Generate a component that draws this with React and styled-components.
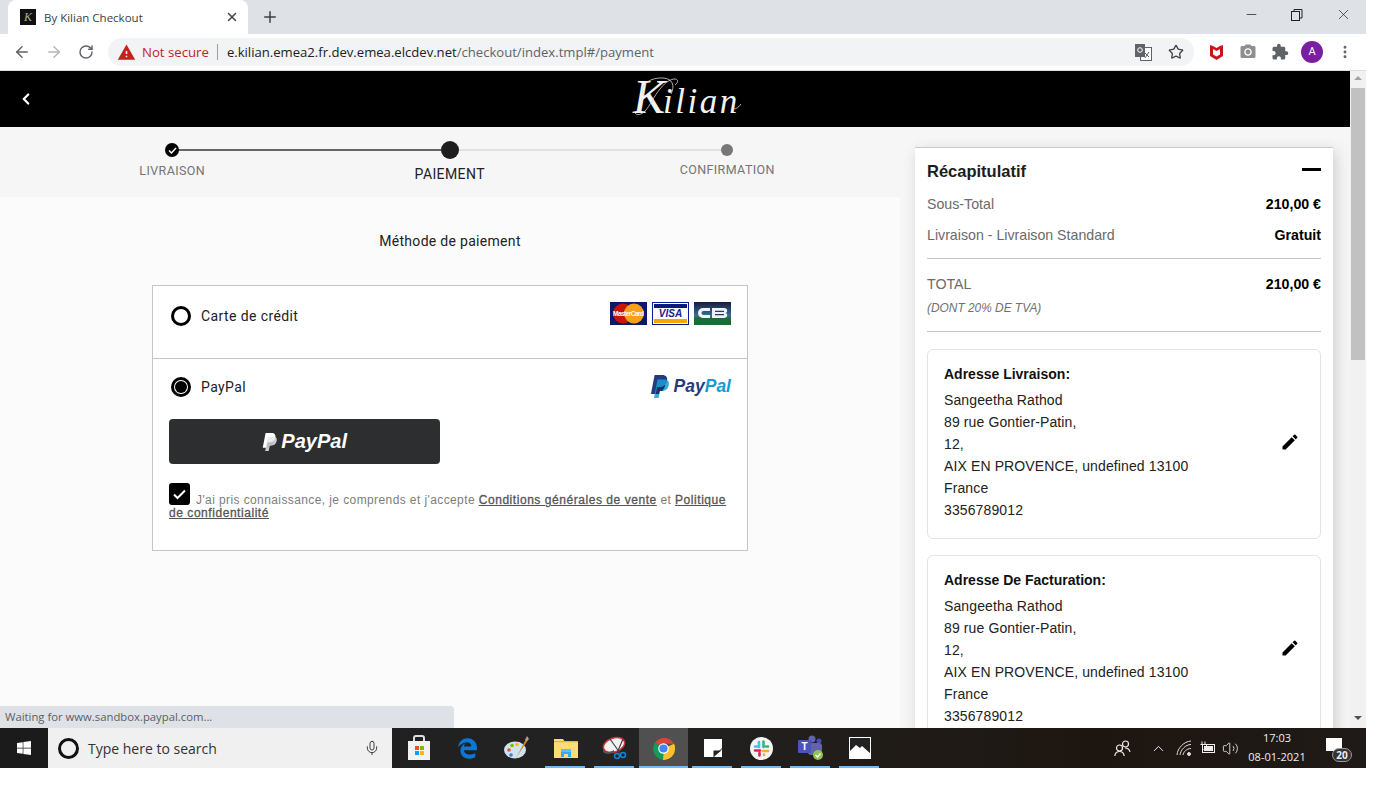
import React from 'react';
import styled, { createGlobalStyle } from 'styled-components';
import { ArrowLeft, ArrowRight, RotateCw, Star, X, Plus, Minus, MoreVertical, ChevronLeft, Mic, ChevronUp, Volume2 } from 'lucide-react';
import { MdEdit, MdCameraAlt, MdExtension, MdWarning } from 'react-icons/md';
import { FaWindows, FaEdgeLegacy } from 'react-icons/fa';

const Global = createGlobalStyle`
  html, body { margin: 0; padding: 0; background: #fff; }
  * { box-sizing: border-box; }
  body { font-family: Roboto, "Liberation Sans", sans-serif; }
`;

const Screen = styled.div`
  width: 1366px;
  height: 768px;
  display: flex;
  flex-direction: column;
  overflow: hidden;
`;

/* browser chrome */
const TabStrip = styled.div`
  height: 34px;
  flex: none;
  background: #dee1e6;
  display: flex;
  align-items: flex-end;
  padding-left: 8px;
`;
const Tab = styled.div`
  width: 240px;
  height: 34px;
  background: #fff;
  border-radius: 8px 8px 0 0;
  display: flex;
  align-items: center;
  padding: 0 9px 0 12px;
  font: 11.5px "Open Sans", sans-serif;
  color: #3c4043;
`;
const Favicon = styled.div`
  width: 16px;
  height: 16px;
  background: #111;
  color: #aaa;
  font: italic 12px/16px "Liberation Serif", serif;
  text-align: center;
  margin-right: 8px;
  flex: none;
`;
const TabTitle = styled.span`
  flex: 1;
  white-space: nowrap;
`;
const NewTab = styled.div`
  display: flex;
  align-self: center;
  margin-left: 13px;
  color: #3c4043;
`;
const WindowButtons = styled.div`
  margin-left: auto;
  display: flex;
  align-self: flex-start;
  height: 29px;
  align-items: center;
  color: #222;
`;
const WindowButton = styled.div`
  width: 46px;
  display: flex;
  justify-content: center;
`;
const Toolbar = styled.div`
  height: 37px;
  flex: none;
  background: #fff;
  border-bottom: 1px solid #dadce0;
  display: flex;
  align-items: center;
  padding: 0 0 0 6px;
  color: #5f6368;
`;
const NavButton = styled.div`
  width: 32px;
  display: flex;
  justify-content: center;
  color: ${p => (p.$off ? '#b4b6b9' : '#5f6368')};
`;
const Omnibox = styled.div`
  margin-left: 6px;
  width: 1086px;
  height: 28px;
  border-radius: 14px;
  background: #f1f3f4;
  display: flex;
  align-items: center;
  padding: 0 10px 0 9px;
  font: 13px "Open Sans", sans-serif;
  white-space: nowrap;
`;
const NotSecure = styled.span`
  color: #c5221f;
  margin-left: 6px;
  padding-right: 8px;
  border-right: 1px solid #9aa0a6;
  line-height: 16px;
  font-size: 13.2px;
`;
const Url = styled.span`
  margin-left: 9px;
  color: #5f6368;
  font-size: 13.1px;
  & b { font-weight: 400; color: #202124; }
`;
const OmniIcons = styled.div`
  margin-left: auto;
  display: flex;
  align-items: center;
  gap: 16px;
  color: #5f6368;
`;
const Extensions = styled.div`
  display: flex;
  align-items: center;
  margin-left: 13px;
  gap: 14px;
`;
const ExtSlot = styled.span`
  width: 18px;
  display: flex;
  justify-content: center;
`;
const Avatar = styled.div`
  width: 22px;
  height: 22px;
  border-radius: 50%;
  background: #7b1fa2;
  color: #fff;
  font: 11px/22px Roboto, sans-serif;
  text-align: center;
  margin-left: -2px;
`;

/* page */
const Viewport = styled.div`
  flex: 1;
  min-height: 0;
  display: flex;
  position: relative;
`;
const Page = styled.div`
  flex: 1;
  min-width: 0;
  display: flex;
  flex-direction: column;
  overflow: hidden;
`;
const Header = styled.header`
  height: 56px;
  flex: none;
  background: #000;
  color: #fff;
  display: flex;
  align-items: center;
  padding-left: 17px;
`;
const Logo = styled.div`
  position: relative;
  margin-left: 598px;
  font: italic 400 35px/56px "Liberation Serif", serif;
  letter-spacing: 2.5px;
  color: #f2f2f2;
  white-space: nowrap;
  & b { font-weight: 400; font-size: 48px; letter-spacing: -2px; }
  & svg { position: absolute; left: 0; top: 7px; }
`;
const Body = styled.div`
  flex: 1;
  min-height: 0;
  display: flex;
  background: #f6f6f6;
`;
const Left = styled.main`
  width: 900px;
  flex: none;
  background: #fbfbfb;
`;
const Stepper = styled.div`
  height: 70px;
  background: #f6f6f6;
  padding-left: 33.5px;
  display: flex;
`;
const Step = styled.div`
  width: 277.5px;
  position: relative;
  display: flex;
  flex-direction: column;
  align-items: center;
  padding-top: 36px;
`;
const StepLine = styled.span`
  position: absolute;
  top: 22px;
  left: 50%;
  width: 100%;
  height: 2px;
  background: ${p => p.$color};
`;
const Dot = styled.span`
  position: absolute;
  top: ${p => 23 - p.$size / 2}px;
  left: calc(50% - ${p => p.$size / 2}px);
  width: ${p => p.$size}px;
  height: ${p => p.$size}px;
  border-radius: 50%;
  background: ${p => p.$color};
  color: #fff;
  display: flex;
  align-items: center;
  justify-content: center;
`;
const StepLabel = styled.span`
  font-size: ${p => (p.$active ? 14 : 12.5)}px;
  color: ${p => (p.$active ? '#222' : '#757575')};
  margin-top: ${p => p.$top}px;
  line-height: 16px;
  letter-spacing: 0.4px;
`;
const MethodTitle = styled.h2`
  margin: 36px 0 36px;
  text-align: center;
  font-size: 14px;
  font-weight: 400;
  line-height: 16px;
  color: #222;
  letter-spacing: 0.3px;
`;
const PayBox = styled.section`
  width: 596px;
  margin: 0 auto;
  height: 266px;
  border: 1px solid #c4c4c4;
  background: #fff;
`;
const MethodRow = styled.div`
  display: flex;
  align-items: center;
  height: ${p => (p.$first ? '73px' : 'auto')};
  padding: ${p => (p.$first ? '0 16px 12px 18px' : '18px 16px 0 18px')};
  border-bottom: ${p => (p.$first ? '1px solid #c4c4c4' : '0')};
`;
const Radio = styled.span`
  width: 20px;
  height: 20px;
  border-radius: 50%;
  border: 3px solid #000;
  display: flex;
  align-items: center;
  justify-content: center;
  flex: none;
  & i { width: 12px; height: 12px; border-radius: 50%; background: #000; }
`;
const MethodName = styled.span`
  margin-left: 10px;
  font: 14px Roboto, sans-serif;
  letter-spacing: 0.4px;
  color: #222;
`;
const CardIcons = styled.div`
  margin-left: auto;
  margin-bottom: 6px;
  display: flex;
  gap: 5px;
`;
const PayPalMark = styled.div`
  margin: -3px 0 -1px auto;
  display: flex;
  align-items: center;
  gap: 4px;
  font: italic 700 17.5px "Liberation Sans", sans-serif;
  color: #253b80;
  & em { color: #179bd7; }
`;
const PayPalButton = styled.button`
  display: flex;
  align-items: center;
  justify-content: center;
  gap: 4px;
  width: 271px;
  height: 45px;
  margin: 22px 0 0 16px;
  border: 0;
  border-radius: 4px;
  background: #2c2e2f;
  color: #fff;
  font: italic 700 20px "Liberation Sans", sans-serif;
`;
const Consent = styled.p`
  margin: 19px 14px 0 16px;
  font: 12px/13px "Liberation Sans", sans-serif;
  letter-spacing: 0.4px;
  color: #7d7d7d;
  & a { color: #555; text-decoration: underline; letter-spacing: 0.55px; -webkit-text-stroke: 0.3px #555; }
`;
const Check = styled.span`
  display: inline-block;
  width: 21px;
  height: 22px;
  padding: 6px 4px;
  border-radius: 3px;
  background: #000;
  margin-right: 6px;
  vertical-align: -1px;
  & svg { display: block; }
`;

const Right = styled.aside`
  flex: 1;
  min-width: 0;
  padding: 20px 17px 0 15px;
`;
const Summary = styled.div`
  background: #fff;
  border-top: 1px solid #c9c9c9;
  box-shadow: 3px 4px 14px rgba(0, 0, 0, 0.16);
  padding: 12px 12px 20px;
`;
const SummaryHead = styled.div`
  display: flex;
  align-items: center;
  justify-content: space-between;
  height: 22px;
  font: 700 16.5px "Liberation Sans", sans-serif;
  color: #1c1c1c;
  margin-bottom: 6px;
  & i { width: 19px; height: 3px; background: #000; margin-bottom: 3px; }
`;
const Line = styled.div`
  display: flex;
  justify-content: space-between;
  align-items: center;
  height: 31px;
  font: 14.2px "Liberation Sans", sans-serif;
  color: #6b6b6b;
  & b { color: #000; }
`;
const Note = styled.div`
  font: italic 11.9px "Liberation Sans", sans-serif;
  color: #707070;
  height: 16px;
  line-height: 16px;
  margin-top: 1px;
`;
const Rule = styled.hr`
  border: 0;
  height: 1px;
  background: #c4c4c4;
  margin: ${p => p.$m};
`;
const Address = styled.div`
  height: 190px;
  margin-bottom: 16px;
  border: 1px solid #e4e4e4;
  border-radius: 6px;
  padding: 15px 16px;
  color: #222;
  display: flex;
  align-items: center;
`;
const AddressText = styled.div`
  flex: 1;
  align-self: flex-start;
  font: 14px/22px "Liberation Sans", sans-serif;
  letter-spacing: 0.12px;
  & h4 { margin: 0 0 6px; font-size: 14px; font-weight: 700; line-height: 18px; color: #111; letter-spacing: 0; }
  & div { height: 22px; }
`;
const EditIcon = styled.span`
  display: flex;
  margin: 0 4px 4px 0;
`;

const Scrollbar = styled.div`
  width: 16px;
  flex: none;
  background: #f1f1f1;
  display: flex;
  flex-direction: column;
  align-items: center;
`;
const ScrollArrow = styled.span`
  width: 0;
  height: 0;
  border-left: 4px solid transparent;
  border-right: 4px solid transparent;
  ${p => (p.$down ? 'border-top: 4px solid #505050; margin-top: 356px;' : 'border-bottom: 4px solid #a3a3a3; margin-top: 5px;')}
`;
const ScrollThumb = styled.span`
  width: 14px;
  height: 272px;
  margin-top: 8px;
  background: #c1c1c1;
`;
const StatusBubble = styled.div`
  position: absolute;
  left: 0;
  bottom: 0;
  width: 454px;
  height: 22px;
  background: #dee1e6;
  border-top-right-radius: 4px;
  padding-left: 5px;
  font: 11.3px/22px "Open Sans", sans-serif;
  color: #5a5e63;
`;

/* taskbar */
const Taskbar = styled.footer`
  height: 40px;
  flex: none;
  display: flex;
  align-items: stretch;
  background: linear-gradient(90deg, #1b1b1b 0%, #232323 45%, #1d1610 80%, #1f1a17 100%);
  color: #fff;
`;
const Start = styled.div`
  width: 48px;
  display: flex;
  align-items: center;
  justify-content: center;
`;
const Search = styled.div`
  width: 344px;
  background: #f0f0f0;
  display: flex;
  align-items: center;
  padding: 0 12px 0 10px;
  font: 14px "Open Sans", sans-serif;
  color: #333;
  & span { flex: 1; margin-left: 9px; }
`;
const Cortana = styled.i`
  width: 21px;
  height: 21px;
  border-radius: 50%;
  border: 3px solid #111;
`;
const Apps = styled.div`
  display: flex;
  padding-left: 2px;
`;
const AppSlot = styled.div`
  width: 49px;
  display: flex;
  align-items: center;
  justify-content: center;
  position: relative;
  background: ${p => (p.$active ? '#505050' : 'transparent')};
  &::after {
    content: '';
    display: ${p => (p.$open ? 'block' : 'none')};
    position: absolute;
    left: ${p => (p.$active ? 0 : 4)}px;
    right: ${p => (p.$active ? 0 : 5)}px;
    bottom: 0;
    height: 2px;
    background: #76b9ed;
  }
`;
const Tray = styled.div`
  margin-left: auto;
  display: flex;
  align-items: center;
  padding-right: 17px;
  color: #eee;
`;
const TrayIcon = styled.span`
  display: flex;
  margin-left: ${p => p.$ml || 0}px;
`;
const Clock = styled.div`
  width: 62px;
  margin: 0 0 2px 7px;
  text-align: center;
  font: 11px/19px "Open Sans", sans-serif;
  color: #eee;
`;
const Notify = styled.div`
  position: relative;
  margin-left: 17px;
  width: 24px;
  height: 24px;
  & span {
    position: absolute;
    right: -3px;
    bottom: -2px;
    width: 20px;
    height: 14px;
    border-radius: 8px;
    border: 1px solid #999;
    background: #333;
    font: 700 10px/12px "Open Sans", sans-serif;
    text-align: center;
  }
  & i { position: absolute; left: 1px; top: 2px; width: 16px; height: 13px; background: #fff; }
`;

const PayPalP = ({ size = 20, a = '#253b80', b = '#179bd7', c = '#222d65' }) => (
  <svg width={size * 0.85} height={size} viewBox="0 0 17 20">
    <path d="M4 0h6.500C14 0 15.500 2 14.800 5 14 9 11.500 10.500 8 10.500H6L5 16.500H.8z" fill={a} />
    <path d="M6.500 4h6c3 0 4.500 1.800 3.800 5-.8 3.600-3 5-6.300 5H8.500L7.500 20H3.500z" fill={b} opacity=".85" />
    <path d="M6 10.500h2c2 0 4-.6 5.300-2.200C12.800 11.800 10.800 14 10 14H8.500l-.6 2.500H5z" fill={c} />
  </svg>
);

const MasterCard = () => (
  <svg width="37" height="23" viewBox="0 0 37 23">
    <rect width="37" height="23" fill="#0a1a6b" />
    <circle cx="13" cy="11.500" r="10" fill="#c81505" />
    <circle cx="24" cy="11.500" r="10" fill="#f7a01b" />
    <text x="18.500" y="13.500" textAnchor="middle" fontSize="6.500" fontWeight="700" fill="#fff" fontFamily="Liberation Sans, sans-serif" textLength="31">MasterCard</text>
  </svg>
);
const Visa = () => (
  <svg width="37" height="23" viewBox="0 0 37 23">
    <rect x=".5" y=".5" width="36" height="22" fill="#fff" stroke="#0a1a9b" />
    <rect x="2" y="2" width="33" height="4" fill="#0a1a7b" />
    <rect x="2" y="17" width="33" height="4" fill="#f7a600" />
    <text x="18.500" y="15" textAnchor="middle" fontSize="10" fontWeight="700" fontStyle="italic" fill="#12247f" fontFamily="Liberation Sans, sans-serif">VISA</text>
  </svg>
);
const CbCard = () => (
  <svg width="37" height="23" viewBox="0 0 37 23">
    <defs>
      <linearGradient id="cb" x1="0" y1="0" x2="0" y2="1">
        <stop offset="0" stopColor="#17193f" />
        <stop offset=".6" stopColor="#3a6f96" />
        <stop offset=".7" stopColor="#1d6a3c" />
        <stop offset="1" stopColor="#1a6a30" />
      </linearGradient>
    </defs>
    <rect width="37" height="23" fill="url(#cb)" />
    <path d="M16 6H9a5 5 0 0 0 0 10h7v-3H9.500a2 2 0 0 1 0-4H16z M18 6h12c4 0 4 4.500 1.500 5 2.500.5 2.500 5-1.500 5H18z" fill="#eef2f6" />
    <path d="M21 8.800h9v1.200h-9zM21 12h9v1.200h-9z" fill="#2a3a66" />
  </svg>
);
const Translate = () => (
  <svg width="17" height="17" viewBox="0 0 17 17">
    <rect x="5.500" y="3.500" width="11" height="13" fill="#fff" stroke="#5f6368" />
    <rect x="0" y="0" width="10" height="13" fill="#5f6368" />
    <circle cx="5" cy="6" r="2.300" fill="none" stroke="#fff" />
    <path d="M9 8l5 5M14 8l-4 6" stroke="#5f6368" />
  </svg>
);
const Store = () => (
  <svg width="24" height="26" viewBox="0 0 24 26">
    <path d="M7 6V3a2 2 0 0 1 2-2h6a2 2 0 0 1 2 2v3" fill="none" stroke="#ddd" strokeWidth="2" />
    <rect x="1" y="6" width="22" height="19" fill="#f2f2f2" />
    <rect x="8" y="11" width="4" height="4" fill="#f25022" />
    <rect x="13" y="11" width="4" height="4" fill="#7fba00" />
    <rect x="8" y="16" width="4" height="4" fill="#00a4ef" />
    <rect x="13" y="16" width="4" height="4" fill="#ffb900" />
  </svg>
);
const Palette = () => (
  <svg width="26" height="26" viewBox="0 0 26 26">
    <ellipse cx="11" cy="15" rx="11" ry="8.500" fill="#cfe3ee" />
    <circle cx="5" cy="15" r="1.800" fill="#e0533d" />
    <circle cx="8" cy="10.500" r="1.800" fill="#7fba00" />
    <circle cx="7" cy="20" r="1.800" fill="#2f7fd6" />
    <circle cx="13" cy="9.500" r="1.800" fill="#ffb900" />
    <path d="M11 25L22 4l2 1L14 20z" fill="#d9822b" />
    <path d="M21 5l2-4 2 3-2 2z" fill="#b9a27a" />
  </svg>
);
const Folder = () => (
  <svg width="24" height="20" viewBox="0 0 24 20">
    <path d="M0 1h9l2 3h13v16H0z" fill="#fddc75" />
    <rect y="3" width="24" height="1.200" fill="#e2b33c" />
    <path d="M7 19v-6h10v6h-3v-3h-4v3z" fill="#3ea6e6" />
    <rect x="7" y="11" width="10" height="3" fill="#5fbdf0" />
  </svg>
);
const Snip = () => (
  <svg width="26" height="24" viewBox="0 0 26 24">
    <ellipse cx="12" cy="9" rx="11" ry="7" fill="#f2f2f2" stroke="#d3323c" strokeWidth="1.500" transform="rotate(-20 12 9)" />
    <path d="M1 14c3 3 8 2 11 0l0 2c-3 2-8 3-11 0z" fill="#555" />
    <path d="M8 3l10 14M21 3L15 17" stroke="#444" strokeWidth="1.200" />
    <circle cx="15" cy="20" r="2.500" fill="none" stroke="#1583d8" strokeWidth="1.500" />
    <circle cx="21" cy="19" r="2.500" fill="none" stroke="#1583d8" strokeWidth="1.500" />
  </svg>
);
const Chrome = () => (
  <svg width="23" height="23" viewBox="0 0 24 24">
    <path d="M12 12L3.200 5.500A12 12 0 0 1 23 7H12z" fill="#db4437" />
    <path d="M12 12L23 7a12 12 0 0 1-11.500 17z" fill="#fbc02d" />
    <path d="M12 12l-.5 12A12 12 0 0 1 3.200 5.500z" fill="#0f9d58" />
    <circle cx="12" cy="12" r="5.500" fill="#fff" />
    <circle cx="12" cy="12" r="4.300" fill="#4285f4" />
  </svg>
);
const Sticky = () => (
  <svg width="18" height="18" viewBox="0 0 18 18">
    <path d="M0 0h18v9l-9 9H0z" fill="#fff" />
    <path d="M10 18l8-8v8z" fill="#fff" />
    <path d="M9.500 17.500v-6h8z" fill="#222" />
  </svg>
);
const Slack = () => (
  <svg width="23" height="23" viewBox="0 0 23 23">
    <circle cx="11.500" cy="11.500" r="11.500" fill="#f4f4f4" />
    <g strokeWidth="2.600" strokeLinecap="round">
      <path d="M9 5v5M5 9.500h2" stroke="#36c5f0" />
      <path d="M13.500 4.500v5.500M16 9.500h2" stroke="#2eb67d" />
      <path d="M13 14h5M14 17.500v.5" stroke="#ecb22e" />
      <path d="M5 13.500h5M9.500 16v2.500" stroke="#e01e5a" />
    </g>
  </svg>
);
const Teams = () => (
  <svg width="26" height="26" viewBox="0 0 26 26">
    <circle cx="14" cy="4" r="3.500" fill="#6264a7" />
    <circle cx="21" cy="6" r="2.500" fill="#464eb8" />
    <rect x="10" y="8" width="14" height="12" rx="3" fill="#6264a7" />
    <rect x="0" y="5" width="13" height="13" rx="1" fill="#4b53bc" />
    <text x="6.500" y="15" textAnchor="middle" fontSize="10" fontWeight="700" fill="#fff" fontFamily="Liberation Sans, sans-serif">T</text>
    <circle cx="20" cy="20" r="5" fill="#92c353" />
    <path d="M17.500 20l2 2 3-3.500" fill="none" stroke="#fff" strokeWidth="1.300" />
  </svg>
);
const Photos = () => (
  <svg width="22" height="22" viewBox="0 0 22 22">
    <rect x=".5" y=".5" width="21" height="21" fill="#222" stroke="#fff" />
    <path d="M0 15l7-7 4 3 2-2 9 8v5H0z" fill="#fff" />
  </svg>
);
const Wifi = () => (
  <svg width="16" height="16" viewBox="0 0 16 16" fill="none" stroke="#ddd" strokeWidth="1">
    <path d="M1 15C1.500 8 8 1.500 15 1" />
    <path d="M4 15C4.500 10 9.500 4.500 15 4.500" />
    <path d="M7 15c.5-3 3.500-6.500 8-6.500" />
    <circle cx="13" cy="14" r="1.500" fill="#ddd" />
  </svg>
);
const Battery = () => (
  <svg width="17" height="14" viewBox="0 0 17 14" fill="none" stroke="#eee">
    <rect x="3.500" y="3.500" width="12" height="8" />
    <rect x="5" y="5" width="9" height="5" fill="#eee" stroke="none" />
    <path d="M3 .5v3M6 .5v3M1.500 3.500h6v2c0 1.500-3 2-3 3" />
  </svg>
);
const People = () => (
  <svg width="17" height="17" viewBox="0 0 17 17" fill="none" stroke="#eee" strokeWidth="1.200">
    <circle cx="11.500" cy="4" r="3" />
    <circle cx="5.500" cy="8" r="3" />
    <path d="M.8 16c.4-3 2-4.500 4.700-4.500S9.800 13 10.200 16M11 8c2.500 0 4.500 1.500 5 4" />
  </svg>
);

const address = ['Sangeetha Rathod', '89 rue Gontier-Patin,', '12,', 'AIX EN PROVENCE, undefined 13100', 'France', '3356789012'];

const AddressCard = ({ title }) => (
  <Address>
    <AddressText>
      <h4>{title}</h4>
      {address.map(l => <div key={l}>{l}</div>)}
    </AddressText>
    <EditIcon><MdEdit size={20} color="#000" /></EditIcon>
  </Address>
);

export default function App() {
  return (
    <Screen>
      <Global />
      <TabStrip>
        <Tab>
          <Favicon>K</Favicon>
          <TabTitle>By Kilian Checkout</TabTitle>
          <X size={14} strokeWidth={2.5} color="#444" />
        </Tab>
        <NewTab><Plus size={18} strokeWidth={2} /></NewTab>
        <WindowButtons>
          <WindowButton><Minus size={15} strokeWidth={1.2} /></WindowButton>
          <WindowButton>
            <svg width="12" height="12" viewBox="0 0 12 12" fill="none" stroke="#222"><rect x=".5" y="2.500" width="8" height="9" /><path d="M3 2.500V.5h8v8.500H8.500" /></svg>
          </WindowButton>
          <WindowButton><X size={17} strokeWidth={1} /></WindowButton>
        </WindowButtons>
      </TabStrip>
      <Toolbar>
        <NavButton><ArrowLeft size={18} strokeWidth={2} /></NavButton>
        <NavButton $off><ArrowRight size={18} strokeWidth={2} /></NavButton>
        <NavButton><RotateCw size={16} strokeWidth={2.2} /></NavButton>
        <Omnibox>
          <MdWarning size={19} color="#c5221f" />
          <NotSecure>Not secure</NotSecure>
          <Url><b>e.kilian.emea2.fr.dev.emea.elcdev.net</b>/checkout/index.tmpl#/payment</Url>
          <OmniIcons>
            <Translate />
            <Star size={16} strokeWidth={2} color="#444" />
          </OmniIcons>
        </Omnibox>
        <Extensions>
          <ExtSlot>
            <svg width="15" height="17" viewBox="0 0 15 17"><path d="M1 1l3 1 3.500 2L11 2l3-1v11l-6.500 4L1 12z" fill="#c8161d" /><path d="M4 5l3.500 2L11 5v5.500l-3.500 2-3.500-2z" fill="#fff" /></svg>
          </ExtSlot>
          <MdCameraAlt size={18} color="#8f8f8f" />
          <MdExtension size={18} color="#5f6368" />
          <Avatar>A</Avatar>
          <MoreVertical size={16} strokeWidth={2.4} color="#5f6368" />
        </Extensions>
      </Toolbar>
      <Viewport>
        <Page>
          <Header>
            <ChevronLeft size={18} strokeWidth={3} />
            <Logo>
              <b>K</b>ilian
              <svg width="112" height="42" viewBox="0 0 112 42" fill="none" stroke="#d8d8d8" strokeWidth=".8">
                <path d="M12 20C4 13 14 1 30 2c10 .5 12 8 8 16" />
                <path d="M1 36c3 4 7 3 11-1 5-5 9-15 15-22 4-5 8-9 14-10 4-.5 5 3 1 6" />
                <path d="M100 32c2 2 5 0 8-4" />
              </svg>
            </Logo>
          </Header>
          <Body>
            <Left>
              <Stepper>
                <Step>
                  <StepLine $color="#666" />
                  <Dot $size={14} $color="#000">
                    <svg width="9" height="9" viewBox="0 0 9 9" fill="none" stroke="#fff" strokeWidth="1.500"><path d="M1 4.500l2.500 2.500L8 2" /></svg>
                  </Dot>
                  <StepLabel $top={0}>LIVRAISON</StepLabel>
                </Step>
                <Step>
                  <StepLine $color="#e2e2e2" />
                  <Dot $size={18} $color="#1e1e1e" />
                  <StepLabel $active $top={3}>PAIEMENT</StepLabel>
                </Step>
                <Step>
                  <Dot $size={12} $color="#777" />
                  <StepLabel $top={-1}>CONFIRMATION</StepLabel>
                </Step>
              </Stepper>
              <MethodTitle>Méthode de paiement</MethodTitle>
              <PayBox>
                <MethodRow $first>
                  <Radio />
                  <MethodName>Carte de crédit</MethodName>
                  <CardIcons><MasterCard /><Visa /><CbCard /></CardIcons>
                </MethodRow>
                <MethodRow>
                  <Radio><i /></Radio>
                  <MethodName>PayPal</MethodName>
                  <PayPalMark><PayPalP size={23} /><span>Pay<em>Pal</em></span></PayPalMark>
                </MethodRow>
                <PayPalButton>
                  <PayPalP size={18} a="#fff" b="#e8e8e8" c="#bdbdbd" />
                  PayPal
                </PayPalButton>
                <Consent>
                  <Check>
                    <svg width="13" height="11" viewBox="0 0 13 11" fill="none" stroke="#fff" strokeWidth="2"><path d="M1 5.500l3.500 3.500L12 1.500" /></svg>
                  </Check>
                  J'ai pris connaissance, je comprends et j'accepte <a>Conditions générales de vente</a> et <a>Politique de confidentialité</a>
                </Consent>
              </PayBox>
            </Left>
            <Right>
              <Summary>
                <SummaryHead>Récapitulatif<i /></SummaryHead>
                <Line><span>Sous-Total</span><b>210,00 €</b></Line>
                <Line><span>Livraison - Livraison Standard</span><b>Gratuit</b></Line>
                <Rule $m="8px 0 9px" />
                <Line><span>TOTAL</span><b>210,00 €</b></Line>
                <Note>(DONT 20% DE TVA)</Note>
                <Rule $m="15px 0 17px" />
                <AddressCard title="Adresse Livraison:" />
                <AddressCard title="Adresse De Facturation:" />
              </Summary>
            </Right>
          </Body>
        </Page>
        <Scrollbar>
          <ScrollArrow />
          <ScrollThumb />
          <ScrollArrow $down />
        </Scrollbar>
        <StatusBubble>Waiting for www.sandbox.paypal.com...</StatusBubble>
      </Viewport>
      <Taskbar>
        <Start><FaWindows size={16} color="#fff" /></Start>
        <Search>
          <Cortana />
          <span>Type here to search</span>
          <Mic size={16} strokeWidth={1.4} color="#333" />
        </Search>
        <Apps>
          <AppSlot><Store /></AppSlot>
          <AppSlot><FaEdgeLegacy size={21} color="#0a78d7" /></AppSlot>
          <AppSlot><Palette /></AppSlot>
          <AppSlot $open><Folder /></AppSlot>
          <AppSlot $open><Snip /></AppSlot>
          <AppSlot $open $active><Chrome /></AppSlot>
          <AppSlot $open><Sticky /></AppSlot>
          <AppSlot $open><Slack /></AppSlot>
          <AppSlot $open><Teams /></AppSlot>
          <AppSlot $open><Photos /></AppSlot>
        </Apps>
        <Tray>
          <TrayIcon><People /></TrayIcon>
          <TrayIcon $ml={19}><ChevronUp size={17} strokeWidth={1.4} /></TrayIcon>
          <TrayIcon $ml={9}><Wifi /></TrayIcon>
          <TrayIcon $ml={7}><Battery /></TrayIcon>
          <TrayIcon $ml={6}><Volume2 size={17} strokeWidth={1.2} /></TrayIcon>
          <Clock>17:03<br />08-01-2021</Clock>
          <Notify><i /><span>20</span></Notify>
        </Tray>
      </Taskbar>
    </Screen>
  );
}
